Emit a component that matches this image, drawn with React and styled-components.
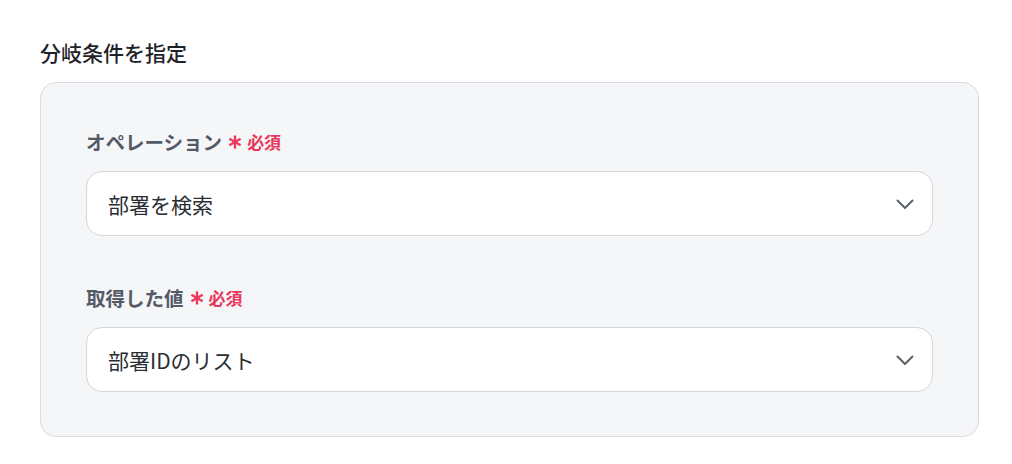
import React from 'react';
import styled, { createGlobalStyle } from 'styled-components';

const GlobalStyle = createGlobalStyle`
  body {
    margin: 0;
    background: #ffffff;
    font-family: "Noto Sans CJK JP", "Noto Sans", sans-serif;
    -webkit-font-smoothing: antialiased;
  }
`;

const Page = styled.div`
  padding: 36px 33px 0 40px;
`;

const Title = styled.h2`
  margin: 0 0 14px;
  font-size: 21px;
  font-weight: 500;
  line-height: 32px;
  color: #1f2329;
`;

const Panel = styled.div`
  background: #f5f6f8;
  border: 1px solid #d9dce1;
  border-radius: 16px;
  padding: 47px 45px 44px;
  display: flex;
  flex-direction: column;
  gap: 50px;
`;

const Field = styled.div`
  display: flex;
  flex-direction: column;
  gap: 17px;
`;

const Label = styled.div`
  display: flex;
  align-items: center;
  font-size: 19.5px;
  font-weight: 700;
  line-height: 24px;
  color: #535a66;
`;

const Star = styled.svg`
  margin-left: 6px;
  flex-shrink: 0;
`;

const Required = styled.span`
  margin-left: 5px;
  font-size: 17px;
  font-weight: 700;
  color: #e8385c;
`;

const Select = styled.div`
  height: 63px;
  background: #ffffff;
  border: 1px solid #d3d6db;
  border-radius: 16px;
  display: flex;
  align-items: center;
  justify-content: space-between;
  padding: 0 17px 0 21px;
  font-size: 21px;
  color: #2a2e33;
`;

const Asterisk = () => (
  <Star width="14" height="14" viewBox="0 0 14 14">
    <g stroke="#e8385c" strokeWidth="2.4" strokeLinecap="butt">
      <line x1="7" y1="0.5" x2="7" y2="13.5" />
      <line x1="1.4" y1="3.75" x2="12.6" y2="10.25" />
      <line x1="1.4" y1="10.25" x2="12.6" y2="3.75" />
    </g>
  </Star>
);

const Chevron = () => (
  <svg width="20" height="20" viewBox="0 0 20 20" fill="none">
    <path d="M2.5 6.5l7.5 7.5 7.5-7.5" stroke="#5c6068" strokeWidth="2" strokeLinecap="round" strokeLinejoin="round" />
  </svg>
);

const fields = [
  { label: 'オペレーション', value: '部署を検索' },
  { label: '取得した値', value: '部署IDのリスト' },
];

export default function App() {
  return (
    <Page>
      <GlobalStyle />
      <Title>分岐条件を指定</Title>
      <Panel>
        {fields.map((f) => (
          <Field key={f.label}>
            <Label>
              {f.label}
              <Asterisk />
              <Required>必須</Required>
            </Label>
            <Select>
              <span>{f.value}</span>
              <Chevron />
            </Select>
          </Field>
        ))}
      </Panel>
    </Page>
  );
}
